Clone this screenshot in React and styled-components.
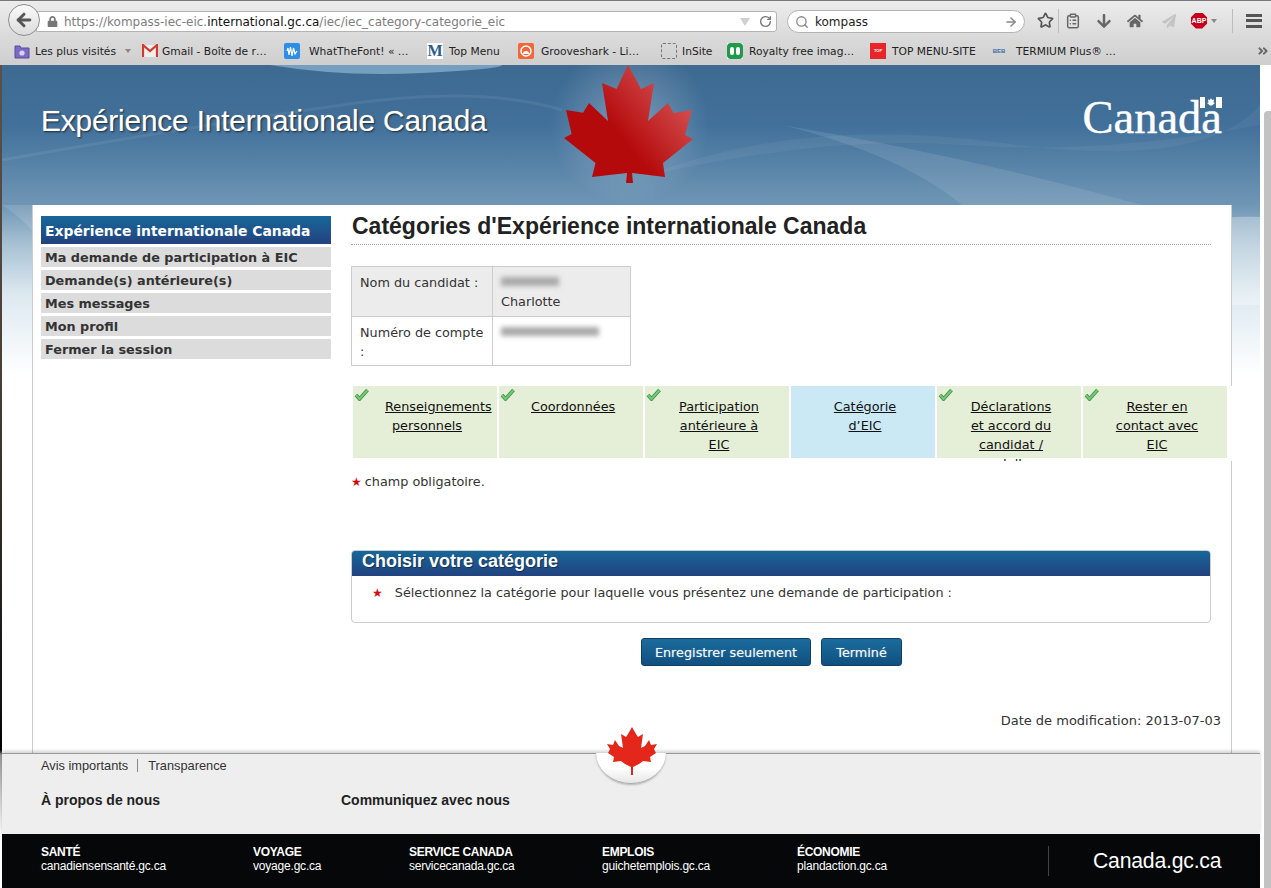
import styled, { createGlobalStyle } from "styled-components";
import { Star, ClipboardList, RotateCw, Search, ArrowRight, ArrowLeft } from "lucide-react";
import { FaArrowDown, FaHome, FaPaperPlane, FaAngleDoubleRight, FaLock } from "react-icons/fa";

const GlobalStyle = createGlobalStyle`
  html, body {
    margin: 0;
    padding: 0;
    background: #fff;
    overflow: hidden;
  }
  * {
    box-sizing: border-box;
  }
`;

const BLUE_BAR = "linear-gradient(#17689a, #23427f)";

const Screen = styled.div`
  width: 1271px;
  height: 888px;
  overflow: hidden;
  display: flex;
  flex-direction: column;
  font-family: "DejaVu Sans", Verdana, sans-serif;
  color: #333;
`;

/* browser chrome */
const Chrome = styled.div`
  height: 65px;
  flex: none;
  background: linear-gradient(#ececec, #d9d9d9 60%, #cfcfcf);
  border-top: 1px solid #777;
`;

const NavBar = styled.div`
  height: 39px;
  display: flex;
  align-items: center;
  position: relative;
  padding-left: 36px;
`;

const BackButton = styled.div`
  position: absolute;
  left: 8px;
  top: 3px;
  width: 32px;
  height: 32px;
  border-radius: 50%;
  border: 1px solid #8f8f8f;
  background: linear-gradient(#fafafa, #dcdcdc);
  display: flex;
  align-items: center;
  justify-content: center;
  color: #555;
`;

const UrlBar = styled.div`
  width: 741px;
  height: 21px;
  flex: none;
  margin-top: 2px;
  padding: 0 4px 0 10px;
  display: flex;
  align-items: center;
  background: #fff;
  border: 1px solid #b3b3b3;
  border-radius: 0 3px 3px 0;
  font-size: 12px;
  color: #7d7d7d;
  white-space: nowrap;
`;

const UrlText = styled.span`
  margin-left: 6px;
  flex: 1;
`;

const Host = styled.span`
  color: #111;
`;

const DropMarker = styled.span`
  width: 0;
  height: 0;
  border-left: 5px solid transparent;
  border-right: 5px solid transparent;
  border-top: 8px solid #d0d0d0;
  margin-right: 9px;
`;

const SearchBar = styled.div`
  width: 238px;
  height: 23px;
  flex: none;
  margin: 2px 0 0 10px;
  padding: 0 6px 0 7px;
  display: flex;
  align-items: center;
  background: #fff;
  border: 1px solid #b3b3b3;
  border-radius: 12px;
  font-size: 12px;
  color: #222;
`;

const SearchText = styled.span`
  margin-left: 6px;
  flex: 1;
`;

const ToolIcons = styled.div`
  display: flex;
  flex: none;
  align-items: center;
  height: 24px;
  margin-left: 8px;
  color: #666;
`;

const ToolSlot = styled.div`
  width: ${(p) => p.$w}px;
  flex: none;
  display: flex;
  align-items: center;
  justify-content: center;
  color: ${(p) => p.$color || "#666"};
`;

const ToolSep = styled.div`
  width: 1px;
  height: 24px;
  flex: none;
  background: #bdbdbd;
`;

const AbpBadge = styled.div`
  width: 16px;
  height: 16px;
  background: #c4001a;
  clip-path: polygon(30% 0, 70% 0, 100% 30%, 100% 70%, 70% 100%, 30% 100%, 0 70%, 0 30%);
  color: #fff;
  font: bold 7px "Liberation Sans", sans-serif;
  display: flex;
  align-items: center;
  justify-content: center;
`;

const Caret = styled.span`
  width: 0;
  height: 0;
  margin-left: 4px;
  border-left: 3.5px solid transparent;
  border-right: 3.5px solid transparent;
  border-top: 4px solid #888;
`;

const MenuBars = styled.div`
  width: 16px;
  height: 14px;
  border-top: 3px solid #555;
  border-bottom: 3px solid #555;
  position: relative;
  &::after {
    content: "";
    position: absolute;
    left: 0;
    right: 0;
    top: 2.5px;
    height: 3px;
    background: #555;
  }
`;

const Bookmarks = styled.div`
  height: 25px;
  padding: 0 0 3px 14px;
  display: flex;
  align-items: center;
  position: relative;
  font-size: 10.7px;
  color: #222;
  white-space: nowrap;
`;

const Bookmark = styled.div`
  width: ${(p) => p.$w}px;
  flex: none;
  display: flex;
  align-items: center;
  gap: ${(p) => p.$gap || 6}px;
`;

const IconSquare = styled.div`
  width: 16px;
  height: 16px;
  flex: none;
  display: flex;
  align-items: center;
  justify-content: center;
  overflow: hidden;
  background: ${(p) => p.$bg || "transparent"};
  color: ${(p) => p.$fg || "#fff"};
  border-radius: ${(p) => p.$radius || 0}px;
  border: ${(p) => (p.$dashed ? "1px dashed #777" : "none")};
  font: bold ${(p) => p.$size || 5}px/1 "Liberation Sans", sans-serif;
`;

const SerifM = styled.span`
  font: bold 16px/1 "Liberation Serif", serif;
  color: #2a5c8f;
`;

const MoreMarks = styled.div`
  position: absolute;
  right: 2px;
  top: 5px;
  color: #666;
`;

/* page */
const Viewport = styled.div`
  flex: 1;
  display: flex;
  min-height: 0;
`;

const WindowEdge = styled.div`
  width: 2px;
  flex: none;
  background: linear-gradient(#5c5148 0, #4a4038 300px, #111 640px, #000 685px, #9a9a9a 690px, #fff 770px);
`;

const Page = styled.div`
  width: 1258px;
  flex: none;
  position: relative;
  display: flex;
  flex-direction: column;
  background: linear-gradient(#3e6a91 0, #41709a 60px, #6f96b5 140px, #a8c2d4 180px, #dde9f0 230px, #fff 310px);
`;

const ScrollTrack = styled.div`
  flex: 1;
  background: #fff;
  padding: 46px 0 0 4px;
`;

const ScrollThumb = styled.div`
  height: 100%;
  background: #c2c2c2;
  border-radius: 4px 0 0 0;
`;

const Waves = styled.svg`
  position: absolute;
  left: 0;
  top: 0;
`;

const Banner = styled.header`
  height: 140px;
  flex: none;
  position: relative;
  display: flex;
  align-items: center;
  justify-content: space-between;
  padding: 0 38px 29px 39px;
`;

const SiteTitle = styled.div`
  font: 29.9px "Liberation Sans", Arial, sans-serif;
  letter-spacing: -0.2px;
  color: #fff;
  text-shadow: 1px 1px 2px rgba(0, 0, 0, 0.7), 0 0 1px rgba(255, 255, 255, 0.6);
`;

const BigLeaf = styled.svg`
  position: absolute;
  left: 560px;
  top: 0;
`;

const Wordmark = styled.div`
  position: relative;
  font: 46.5px/1 "Liberation Serif", serif;
  -webkit-text-stroke: 0.4px #fff;
  color: #fff;
  margin-top: -5px;
`;

const FlagMark = styled.svg`
  position: absolute;
  right: 0;
  top: 2px;
`;

const ContentBox = styled.div`
  position: relative;
  width: 1200px;
  height: 548px;
  margin-left: 30px;
  padding: 11px 0 0 8px;
  background: #fff;
  border-left: 1px solid #ccc;
  border-right: 1px solid #ccc;
  display: flex;
  gap: 20px;
`;

const SideNav = styled.nav`
  width: 290px;
  flex: none;
  display: flex;
  flex-direction: column;
  gap: 3px;
`;

const SideHead = styled.div`
  height: 28px;
  line-height: 30px;
  padding-left: 4px;
  background: ${BLUE_BAR};
  color: #fff;
  font-size: 13.9px;
  font-weight: bold;
  white-space: nowrap;
`;

const SideItem = styled.div`
  height: 20px;
  line-height: 21px;
  padding-left: 4px;
  background: #dcdcdc;
  color: #333;
  font-size: 12.8px;
  font-weight: bold;
  white-space: nowrap;
`;

const Main = styled.main`
  width: 860px;
  flex: none;
`;

const PageTitle = styled.h1`
  margin: 0 0 21px;
  height: 29px;
  padding-left: 1px;
  border-bottom: 1px dotted #aaa;
  font: bold 23px/20px "Liberation Sans", Arial, sans-serif;
  color: #222;
`;

const InfoTable = styled.table`
  width: 279px;
  height: 99px;
  table-layout: fixed;
  border-collapse: collapse;
  font-size: 12.8px;
  line-height: 19px;
`;

const InfoRow = styled.tr`
  height: 49.5px;
`;

const LabelCell = styled.td`
  width: 141px;
  padding: 6px 3px 3px 8px;
  vertical-align: top;
  border: 1px solid #ccc;
  background: ${(p) => (p.$shaded ? "#ececec" : "#fff")};
`;

const ValueCell = styled(LabelCell)`
  width: 138px;
`;

const Blurred = styled.span`
  display: block;
  width: ${(p) => p.$w}px;
  height: 9px;
  margin-top: 4px;
  margin-bottom: 6px;
  background: #a9a9a9;
  filter: blur(2.5px);
`;

const Steps = styled.div`
  display: flex;
  gap: 2px;
  width: 882px;
  margin: 20px 0 0 2px;
  padding-right: 6px;
  position: relative;
  background: #fff;
`;

/* the last line of a long label runs a little past the coloured cell */
const Step = styled.div`
  position: relative;
  width: 144px;
  height: 75px;
  flex: none;
  overflow: hidden;
  padding: 11px 28px 0 32px;
  background: linear-gradient(
    ${(p) => (p.$current ? "#cbe9f5" : "#e5eed7")} 72px,
    #fff 72px
  );
  font-size: 12.8px;
  line-height: 19px;
  text-align: center;
  color: #111;
`;

const StepLink = styled.a`
  color: #111;
  text-decoration: underline;
`;

const CheckIcon = styled.svg`
  position: absolute;
  left: 1px;
  top: 2px;
`;

const Required = styled.p`
  margin: 11px 0 0;
  font-size: 12.8px;
  line-height: 19px;
`;

const RedStar = styled.span`
  color: #d40c12;
  font-size: 12px;
  line-height: 1;
  margin-right: ${(p) => p.$gap || 3}px;
`;

const Panel = styled.section`
  margin-top: 59px;
  height: 73px;
  border: 1px solid #ccc;
  border-radius: 4px;
  overflow: hidden;
`;

const PanelHead = styled.div`
  height: 26px;
  margin: -1px -1px 0;
  padding-left: 11px;
  background: ${BLUE_BAR};
  color: #fff;
  font: bold 18px/23px "Liberation Sans", Arial, sans-serif;
  text-shadow: 1px 1px 1px rgba(0, 0, 0, 0.4);
`;

const PanelBody = styled.div`
  padding: 7px 0 0 20px;
  font-size: 12.8px;
  line-height: 19px;
`;

const Actions = styled.div`
  display: flex;
  justify-content: center;
  gap: 10px;
  margin: 15px 0 0 -19px;
`;

const ActionButton = styled.button`
  height: 28px;
  min-width: 81px;
  padding: 0 13px;
  border: 1px solid #0e3f66;
  border-radius: 3px;
  background: linear-gradient(#1b6c9d, #10507f);
  color: #f2f6f9;
  font-family: "DejaVu Sans", Verdana, sans-serif;
  font-size: 12.8px;
  text-shadow: 0 0 1px rgba(255, 255, 255, 0.5);
`;

const Modified = styled.div`
  margin: 45px -10px 0 0;
  text-align: right;
  font-size: 13px;
  line-height: 19px;
  color: #333;
`;

/* footer */
const FooterTop = styled.footer`
  position: relative;
  height: 81px;
  flex: none;
  padding: 4px 0 0 39px;
  background: #eee;
  border-top: 1px solid #999;
  box-shadow: 0 -2px 3px rgba(0, 0, 0, 0.18);
  font-family: "Liberation Sans", Arial, sans-serif;
  color: #333;
`;

const LegalLinks = styled.div`
  display: flex;
  align-items: center;
  font-size: 12.8px;
  line-height: 15px;
`;

const LegalSep = styled.span`
  width: 1px;
  height: 13px;
  margin: 0 10px 0 9px;
  background: #888;
`;

const FooterHeads = styled.div`
  display: flex;
  margin-top: 19px;
`;

const FooterHead = styled.div`
  width: ${(p) => p.$w}px;
  font-size: 14px;
  font-weight: bold;
  line-height: 17px;
  color: #222;
`;

const LeafCup = styled.div`
  position: absolute;
  left: 594px;
  top: -1px;
  width: 70px;
  height: 31px;
  border-radius: 0 0 35px 35px / 0 0 31px 31px;
  background: linear-gradient(#fff 50%, #e6e6e6);
  border-bottom: 1px solid #aaa;
  box-shadow: 0 1px 2px rgba(0, 0, 0, 0.25);
`;

const SmallLeaf = styled.svg`
  position: absolute;
  left: 605px;
  top: -27px;
`;

const FooterBand = styled.div`
  height: 54px;
  flex: none;
  display: flex;
  align-items: center;
  padding-left: 39px;
  background: #050708;
  color: #fff;
  font-family: "Liberation Sans", Arial, sans-serif;
`;

const BandColumn = styled.div`
  width: ${(p) => p.$w}px;
  flex: none;
  margin-top: -4px;
  font-size: 12px;
  line-height: 14px;
  letter-spacing: -0.2px;
`;

const BandTitle = styled.div`
  font-weight: bold;
  font-size: 12px;
  letter-spacing: -0.3px;
`;

const BandBrand = styled.div`
  height: 30px;
  padding-left: 44px;
  border-left: 1px solid #444;
  font-size: 21.2px;
  line-height: 30px;
  letter-spacing: -0.2px;
`;

const BOOKMARK_ICONS = {
  folder: (
    <svg width="16" height="16" viewBox="0 0 16 16">
      <path d="M1 3h5l1 2h8v10H1z" fill="#7b6bc4" stroke="#5a4ba0" />
      <circle cx="8" cy="10" r="2.6" fill="#d8d2f2" />
    </svg>
  ),
  gmail: (
    <svg width="16" height="14" viewBox="0 0 16 14">
      <path d="M1 1h14v12H1z" fill="#eee" />
      <path d="M1 13V1l7 6 7-6v12" fill="none" stroke="#d33a2c" strokeWidth="2.2" />
    </svg>
  ),
  wave: (
    <svg width="12" height="12" viewBox="0 0 12 12">
      <path d="M1 6l1-3 1 7 1.500-8 1.500 9 1.500-8 1.500 6L11 6" fill="none" stroke="#fff" strokeWidth="1.200" />
    </svg>
  ),
  groove: (
    <svg width="12" height="12" viewBox="0 0 12 12">
      <circle cx="6" cy="6" r="5" fill="none" stroke="#fff" strokeWidth="1.500" />
      <path d="M3 9a3 3 0 0 1 6 0z" fill="#fff" />
    </svg>
  ),
  green: (
    <svg width="12" height="10" viewBox="0 0 12 10">
      <rect x="1" y="1" width="4" height="8" rx="2" fill="#fff" />
      <rect x="7" y="1" width="4" height="8" rx="2" fill="#fff" />
    </svg>
  ),
};

const LEAF_POINTS =
  "66,0 79,24 92,18 86,56 106,38 111.500,48 130,45 123,70 131,74 101,98 103,112 70,108 71,118 64,118 65,108 30,112 33.500,98 2,73 9.600,69 4,45 21,47.700 27,38 46,56 40,18 54.600,24";

const SMALL_LEAF_POINTS =
  "25,0 29,7 31,10 36,7 35,14 34,21 38,19 42,13 44,18 50,17 47,22 49,26 43,30 44,35 36,34 32,37 26,40 26,48 24,48 24,40 18,37 14,34 6,35 7,30 1,26 3,22 0,17 6,18 8,13 12,19 16,21 15,14 14,7 19,10 21,7";

const STEPS = [
  { label: "Renseignements personnels", done: true },
  { label: "Coordonnées", done: true },
  { label: "Participation antérieure à EIC", done: true },
  { label: "Catégorie d’EIC", current: true },
  { label: "Déclarations et accord du candidat / adulte", done: true },
  { label: "Rester en contact avec EIC", done: true },
];

const BAND_COLUMNS = [
  { w: 212, title: "SANTÉ", site: "canadiensensanté.gc.ca" },
  { w: 156, title: "VOYAGE", site: "voyage.gc.ca" },
  { w: 193, title: "SERVICE CANADA", site: "servicecanada.gc.ca" },
  { w: 195, title: "EMPLOIS", site: "guichetemplois.gc.ca" },
  { w: 251, title: "ÉCONOMIE", site: "plandaction.gc.ca" },
];

function CheckMark() {
  return (
    <CheckIcon width="15" height="13" viewBox="0 0 15 13">
      <path d="M2 7l3.500 4L13.500 2" fill="none" stroke="#3f8f46" strokeWidth="3.600" />
      <path d="M2 7l3.500 4L13.500 2" fill="none" stroke="#74c878" strokeWidth="2" />
    </CheckIcon>
  );
}

export default function App() {
  return (
    <Screen>
      <GlobalStyle />
      <Chrome>
        <NavBar>
          <BackButton>
            <ArrowLeft size={20} strokeWidth={3.5} />
          </BackButton>
          <UrlBar>
            <FaLock size={11} color="#777" />
            <UrlText>
              https://kompass-iec-eic.<Host>international.gc.ca</Host>/iec/iec_category-categorie_eic
            </UrlText>
            <DropMarker />
            <RotateCw size={13} strokeWidth={2.5} color="#777" />
          </UrlBar>
          <SearchBar>
            <Search size={14} strokeWidth={2.2} color="#888" />
            <SearchText>kompass</SearchText>
            <ArrowRight size={14} strokeWidth={2.5} color="#888" />
          </SearchBar>
          <ToolIcons>
            <ToolSlot $w={25}>
              <Star size={17} strokeWidth={2.4} color="#555" />
            </ToolSlot>
            <ToolSep />
            <ToolSlot $w={28}>
              <ClipboardList size={16} strokeWidth={2.2} />
            </ToolSlot>
            <ToolSlot $w={33}>
              <FaArrowDown size={16} />
            </ToolSlot>
            <ToolSlot $w={30}>
              <FaHome size={16} />
            </ToolSlot>
            <ToolSlot $w={38} $color="#c4c4c4">
              <FaPaperPlane size={14} />
            </ToolSlot>
            <ToolSlot $w={32}>
              <AbpBadge>ABP</AbpBadge>
              <Caret />
            </ToolSlot>
            <ToolSlot $w={12} />
            <ToolSep />
            <ToolSlot $w={42}>
              <MenuBars />
            </ToolSlot>
          </ToolIcons>
        </NavBar>
        <Bookmarks>
          <Bookmark $w={128} $gap={5}>
            <IconSquare>{BOOKMARK_ICONS.folder}</IconSquare>
            Les plus visités
            <Caret />
          </Bookmark>
          <Bookmark $w={142} $gap={4}>
            <IconSquare>{BOOKMARK_ICONS.gmail}</IconSquare>
            Gmail - Boîte de r…
          </Bookmark>
          <Bookmark $w={143} $gap={9}>
            <IconSquare $bg="#2b8fe8" $radius={2}>{BOOKMARK_ICONS.wave}</IconSquare>
            WhatTheFont! « …
          </Bookmark>
          <Bookmark $w={91}>
            <IconSquare $bg="#fff"><SerifM>M</SerifM></IconSquare>
            Top Menu
          </Bookmark>
          <Bookmark $w={143} $gap={7}>
            <IconSquare $bg="#f2663a" $radius={2}>{BOOKMARK_ICONS.groove}</IconSquare>
            Grooveshark - Li…
          </Bookmark>
          <Bookmark $w={66} $gap={5}>
            <IconSquare $dashed $radius={2} />
            InSite
          </Bookmark>
          <Bookmark $w={143}>
            <IconSquare $bg="#fff"><IconSquare $bg="#1f9a4b" $radius={4}>{BOOKMARK_ICONS.green}</IconSquare></IconSquare>
            Royalty free imag…
          </Bookmark>
          <Bookmark $w={121}>
            <IconSquare $bg="#e8262a" $size={4}>TOP</IconSquare>
            TOP MENU-SITE
          </Bookmark>
          <Bookmark $w={140} $gap={9}>
            <IconSquare $fg="#3a6ea8" $size={6}>BEB</IconSquare>
            TERMIUM Plus® …
          </Bookmark>
          <MoreMarks>
            <FaAngleDoubleRight size={12} />
          </MoreMarks>
        </Bookmarks>
      </Chrome>

      <Viewport>
        <WindowEdge />
        <Page>
          <Waves width="1258" height="320" viewBox="0 0 1258 320">
            <defs>
              <radialGradient id="glow">
                <stop offset="0" stopColor="#fff" stopOpacity="0.3" />
                <stop offset="1" stopColor="#fff" stopOpacity="0" />
              </radialGradient>
            </defs>
            <path d="M268 0Q340 12 420 8T500 0Z" fill="#8db6d2" opacity="0.7" />
            <path d="M0 95Q200 60 340 40T560 45" fill="none" stroke="#fff" strokeOpacity="0.07" strokeWidth="3" />
            <path d="M640 112Q800 50 1000 78T1258 40V60Q1100 90 960 80T640 112Z" fill="#fff" opacity="0.05" />
            <path d="M780 60Q960 90 1140 140H960Q900 90 780 60Z" fill="#fff" opacity="0.1" />
            <path d="M0 140Q16 150 30 165V140Z" fill="#fff" opacity="0.12" />
            <path d="M1150 170Q1200 150 1258 152V240H1150Z" fill="#fff" opacity="0.3" />
            <circle cx="628" cy="60" r="80" fill="url(#glow)" />
          </Waves>
          <Banner>
            <SiteTitle>Expérience Internationale Canada</SiteTitle>
            <BigLeaf width="132" height="119" viewBox="0 0 132 119">
              <defs>
                <linearGradient id="leafRed" x1="0.15" y1="0.8" x2="0.95" y2="0.2">
                  <stop offset="0.35" stopColor="#b50a0c" />
                  <stop offset="1" stopColor="#d65656" />
                </linearGradient>
              </defs>
              <polygon points={LEAF_POINTS} fill="url(#leafRed)" />
            </BigLeaf>
            <Wordmark>
              Canada
              <FlagMark width="22" height="11" viewBox="0 0 22 11">
                <rect x="0" width="5" height="11" fill="#fff" />
                <rect x="16" width="6" height="11" fill="#fff" />
                <path d="M11 1l1 2 2-.5-.5 3 1.500.5-3 2.500h-2L7 6l1.500-.5-.5-3 2 .5z" fill="#fff" />
              </FlagMark>
            </Wordmark>
          </Banner>

          <ContentBox>
            <SideNav>
              <SideHead>Expérience internationale Canada</SideHead>
              <SideItem>Ma demande de participation à EIC</SideItem>
              <SideItem>Demande(s) antérieure(s)</SideItem>
              <SideItem>Mes messages</SideItem>
              <SideItem>Mon profil</SideItem>
              <SideItem>Fermer la session</SideItem>
            </SideNav>
            <Main>
              <PageTitle>Catégories d'Expérience internationale Canada</PageTitle>
              <InfoTable>
                <tbody>
                  <InfoRow>
                    <LabelCell $shaded>Nom du candidat :</LabelCell>
                    <ValueCell $shaded>
                      <Blurred $w={58} />
                      Charlotte
                    </ValueCell>
                  </InfoRow>
                  <InfoRow>
                    <LabelCell>Numéro de compte :</LabelCell>
                    <ValueCell>
                      <Blurred $w={98} />
                    </ValueCell>
                  </InfoRow>
                </tbody>
              </InfoTable>

              <Steps>
                {STEPS.map((step) => (
                  <Step key={step.label} $current={step.current}>
                    {step.done && <CheckMark />}
                    <StepLink>{step.label}</StepLink>
                  </Step>
                ))}
              </Steps>

              <Required>
                <RedStar>★</RedStar>champ obligatoire.
              </Required>

              <Panel>
                <PanelHead>Choisir votre catégorie</PanelHead>
                <PanelBody>
                  <RedStar $gap={12}>★</RedStar>Sélectionnez la catégorie pour laquelle vous présentez une demande de participation :
                </PanelBody>
              </Panel>

              <Actions>
                <ActionButton>Enregistrer seulement</ActionButton>
                <ActionButton>Terminé</ActionButton>
              </Actions>

              <Modified>Date de modification: 2013-07-03</Modified>
            </Main>
          </ContentBox>

          <FooterTop>
            <LeafCup />
            <SmallLeaf width="50" height="48" viewBox="0 0 50 48">
              <polygon points={SMALL_LEAF_POINTS} fill="#e5261a" />
            </SmallLeaf>
            <LegalLinks>
              Avis importants
              <LegalSep />
              Transparence
            </LegalLinks>
            <FooterHeads>
              <FooterHead $w={300}>À propos de nous</FooterHead>
              <FooterHead $w={300}>Communiquez avec nous</FooterHead>
            </FooterHeads>
          </FooterTop>
          <FooterBand>
            {BAND_COLUMNS.map((col) => (
              <BandColumn key={col.title} $w={col.w}>
                <BandTitle>{col.title}</BandTitle>
                {col.site}
              </BandColumn>
            ))}
            <BandBrand>Canada.gc.ca</BandBrand>
          </FooterBand>
        </Page>
        <ScrollTrack>
          <ScrollThumb />
        </ScrollTrack>
      </Viewport>
    </Screen>
  );
}
